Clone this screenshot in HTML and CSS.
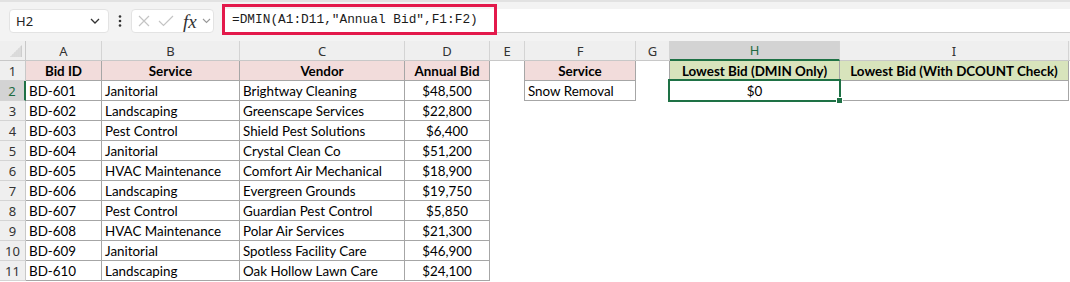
FILE: index.html
```html
<!DOCTYPE html>
<html lang="en">
<head>
  <meta charset="UTF-8" />
  <title>DMIN Lowest Bid</title>
  <link rel="stylesheet" href="styles.css">
</head>
<body>

<div class="toolbar">
  <div class="name-box">
    <span>H2</span>
    <svg class="chev" width="10" height="6" viewBox="0 0 10 6"><path d="M1 1 L5 5 L9 1" fill="none" stroke="#333" stroke-width="1.3"/></svg>
  </div>
  <div class="dots">
    <svg width="4" height="12" viewBox="0 0 4 12"><circle cx="2" cy="1.5" r="1.3" fill="#333"/><circle cx="2" cy="6" r="1.3" fill="#333"/><circle cx="2" cy="10.5" r="1.3" fill="#333"/></svg>
  </div>
  <div class="func-box">
    <svg width="12" height="12" viewBox="0 0 12 12"><path d="M1 1 L11 11 M11 1 L1 11" stroke="#c4c4c4" stroke-width="1.2"/></svg>
    <svg width="16" height="12" viewBox="0 0 16 12"><path d="M1 6 L5.5 10.5 L15 1" fill="none" stroke="#c4c4c4" stroke-width="1.2"/></svg>
    <span class="fx">fx</span>
    <svg width="9" height="6" viewBox="0 0 9 6"><path d="M1 1 L4.5 4.5 L8 1" fill="none" stroke="#999" stroke-width="1.1"/></svg>
  </div>
  <div class="formula">
    <span class="formula-text">=DMIN(A1:D11,"Annual Bid",F1:F2)</span>
  </div>
</div>

<div class="sheet">
  <!-- column headers -->
  <div class="corner"><svg width="12" height="12" viewBox="0 0 12 12"><path d="M12 0 V12 H0 Z" fill="#cdcdcd"/><path d="M2 10v2M4 8v4M6 6v6M8 4v8M10 2v10" stroke="#efefef" stroke-width="0.8"/></svg></div>
  <div class="ch">A</div>
  <div class="ch">B</div>
  <div class="ch">C</div>
  <div class="ch">D</div>
  <div class="ch">E</div>
  <div class="ch">F</div>
  <div class="ch">G</div>
  <div class="ch sel">H</div>
  <div class="ch">I</div>
  <div class="ch rest"></div>

  <!-- row 1 -->
  <div class="rh">1</div>
  <div class="cell b head pink">Bid ID</div>
  <div class="cell b head pink">Service</div>
  <div class="cell b head pink">Vendor</div>
  <div class="cell b head pink">Annual Bid</div>
  <div class="cell edge"></div>
  <div class="cell b head pink">Service</div>
  <div class="cell edge"></div>
  <div class="cell b head green">Lowest Bid (DMIN Only)</div>
  <div class="cell b head green">Lowest Bid (With DCOUNT Check)</div>
  <div class="cell"></div>

  <!-- row 2 -->
  <div class="rh sel">2</div>
  <div class="cell b">BD-601</div>
  <div class="cell b">Janitorial</div>
  <div class="cell b">Brightway Cleaning</div>
  <div class="cell b num">$48,500</div>
  <div class="cell edge"></div>
  <div class="cell b">Snow Removal</div>
  <div class="cell edge"></div>
  <div class="cell b num active">$0</div>
  <div class="cell b"></div>
  <div class="cell"></div>

  <div class="rh">3</div>
  <div class="cell b">BD-602</div>
  <div class="cell b">Landscaping</div>
  <div class="cell b">Greenscape Services</div>
  <div class="cell b num">$22,800</div>
  <div class="cell"></div><div class="cell"></div><div class="cell"></div><div class="cell"></div><div class="cell"></div><div class="cell"></div>

  <div class="rh">4</div>
  <div class="cell b">BD-603</div>
  <div class="cell b">Pest Control</div>
  <div class="cell b">Shield Pest Solutions</div>
  <div class="cell b num">$6,400</div>
  <div class="cell"></div><div class="cell"></div><div class="cell"></div><div class="cell"></div><div class="cell"></div><div class="cell"></div>

  <div class="rh">5</div>
  <div class="cell b">BD-604</div>
  <div class="cell b">Janitorial</div>
  <div class="cell b">Crystal Clean Co</div>
  <div class="cell b num">$51,200</div>
  <div class="cell"></div><div class="cell"></div><div class="cell"></div><div class="cell"></div><div class="cell"></div><div class="cell"></div>

  <div class="rh">6</div>
  <div class="cell b">BD-605</div>
  <div class="cell b">HVAC Maintenance</div>
  <div class="cell b">Comfort Air Mechanical</div>
  <div class="cell b num">$18,900</div>
  <div class="cell"></div><div class="cell"></div><div class="cell"></div><div class="cell"></div><div class="cell"></div><div class="cell"></div>

  <div class="rh">7</div>
  <div class="cell b">BD-606</div>
  <div class="cell b">Landscaping</div>
  <div class="cell b">Evergreen Grounds</div>
  <div class="cell b num">$19,750</div>
  <div class="cell"></div><div class="cell"></div><div class="cell"></div><div class="cell"></div><div class="cell"></div><div class="cell"></div>

  <div class="rh">8</div>
  <div class="cell b">BD-607</div>
  <div class="cell b">Pest Control</div>
  <div class="cell b">Guardian Pest Control</div>
  <div class="cell b num">$5,850</div>
  <div class="cell"></div><div class="cell"></div><div class="cell"></div><div class="cell"></div><div class="cell"></div><div class="cell"></div>

  <div class="rh">9</div>
  <div class="cell b">BD-608</div>
  <div class="cell b">HVAC Maintenance</div>
  <div class="cell b">Polar Air Services</div>
  <div class="cell b num">$21,300</div>
  <div class="cell"></div><div class="cell"></div><div class="cell"></div><div class="cell"></div><div class="cell"></div><div class="cell"></div>

  <div class="rh">10</div>
  <div class="cell b">BD-609</div>
  <div class="cell b">Janitorial</div>
  <div class="cell b">Spotless Facility Care</div>
  <div class="cell b num">$46,900</div>
  <div class="cell"></div><div class="cell"></div><div class="cell"></div><div class="cell"></div><div class="cell"></div><div class="cell"></div>

  <div class="rh">11</div>
  <div class="cell b">BD-610</div>
  <div class="cell b">Landscaping</div>
  <div class="cell b">Oak Hollow Lawn Care</div>
  <div class="cell b num">$24,100</div>
  <div class="cell"></div><div class="cell"></div><div class="cell"></div><div class="cell"></div><div class="cell"></div><div class="cell"></div>
</div>

</body>
</html>
```

FILE: styles.css
```css
body {
  margin: 0;
  background-color: #fff;
  font-family: 'Lato', sans-serif;
  color: #000;
}

/* formula bar */
.toolbar {
  height: 41px;
  box-sizing: border-box;
  background-color: #f3f3f3;
  border-top: 2px solid #e2e2e2;
  display: flex;
  align-items: flex-start;
  padding: 7px 0 0 9px;
}

.name-box {
  width: 100px;
  height: 24px;
  box-sizing: border-box;
  background-color: #fff;
  border: 1px solid #e3e3e3;
  border-radius: 4px;
  display: flex;
  align-items: center;
  justify-content: space-between;
  padding: 0 8px 0 6px;
  font-family: 'Noto Sans', sans-serif;
  font-size: 13px;
  color: #222;
}

.dots {
  width: 22px;
  height: 24px;
  display: flex;
  align-items: center;
  justify-content: center;
}

.func-box {
  width: 83px;
  height: 24px;
  box-sizing: border-box;
  background-color: #fff;
  border: 1px solid #e3e3e3;
  border-radius: 4px;
  display: flex;
  align-items: center;
  padding: 0 2px 0 6px;
  gap: 8px;
}

.fx {
  font-family: 'Liberation Serif', serif;
  font-style: italic;
  font-size: 19px;
  color: #333;
  margin-left: 1px;
  margin-right: -3px;
  line-height: 1;
}

.formula {
  flex: 1;
  height: 24px;
  margin-left: 8px;
  box-sizing: border-box;
  background-color: #fff;
  border-bottom: 1px solid #d0d0d0;
  display: flex;
}

.formula-text {
  width: 275px;
  height: 31px;
  margin-top: -5px;
  box-sizing: border-box;
  border: 3px solid #e3194b;
  padding-left: 7px;
  display: flex;
  align-items: center;
  font-family: 'Liberation Mono', monospace;
  font-size: 12.8px;
  color: #1b1b1b;
  white-space: nowrap;
}

/* grid */
.sheet {
  display: grid;
  grid-template-columns: 26px 76px 138px 165px 85px 35px 111px 34px 170px 229px 1fr;
  grid-auto-rows: 20px;
}

.corner,
.ch,
.rh {
  background-color: #efefef;
  box-sizing: border-box;
  font-family: 'Noto Sans', sans-serif;
  font-size: 13px;
  color: #333;
  display: flex;
  align-items: center;
  justify-content: center;
}

.corner {
  border-right: 1px solid #c8c8c8;
  border-bottom: 1px solid #c8c8c8;
  align-items: flex-end;
  justify-content: flex-end;
  padding: 0 3px 3px 0;
}

.ch {
  border-right: 1px solid #d4d4d4;
  border-bottom: 1px solid #c8c8c8;
}

.ch.sel {
  background-color: #d3d3d3;
  border-bottom: 2px solid #1e7145;
  color: #1e6b41;
}

.ch.rest {
  border-right: none;
}

.rh {
  border-right: 1px solid #c8c8c8;
  border-bottom: 1px solid #d4d4d4;
}

.rh.sel {
  background-color: #d3d3d3;
  border-right: 2px solid #1e7145;
  color: #1e6b41;
}

.cell {
  box-sizing: border-box;
  padding: 1px 3px 0;
  font-size: 13.4px;
  white-space: nowrap;
  overflow: hidden;
  display: flex;
  align-items: center;
}

.cell.b {
  border-right: 1px solid #a6a6a6;
  border-bottom: 1px solid #a6a6a6;
}

.cell.edge {
  border-right: 1px solid #a6a6a6;
}

.head {
  font-weight: 700;
  justify-content: center;
}

.pink {
  background-color: #f2dcdb;
}

.green {
  background-color: #d8e4bc;
}

.num {
  justify-content: center;
}

.active {
  position: relative;
  overflow: visible;
}

.active::after {
  content: "";
  position: absolute;
  left: -2px;
  top: -2px;
  right: -2px;
  bottom: -2px;
  border: 2px solid #1e7145;
}

.active::before {
  content: "";
  position: absolute;
  right: -4px;
  bottom: -4px;
  width: 5px;
  height: 5px;
  background-color: #1e7145;
  border: 1px solid #fff;
  z-index: 1;
}
```
